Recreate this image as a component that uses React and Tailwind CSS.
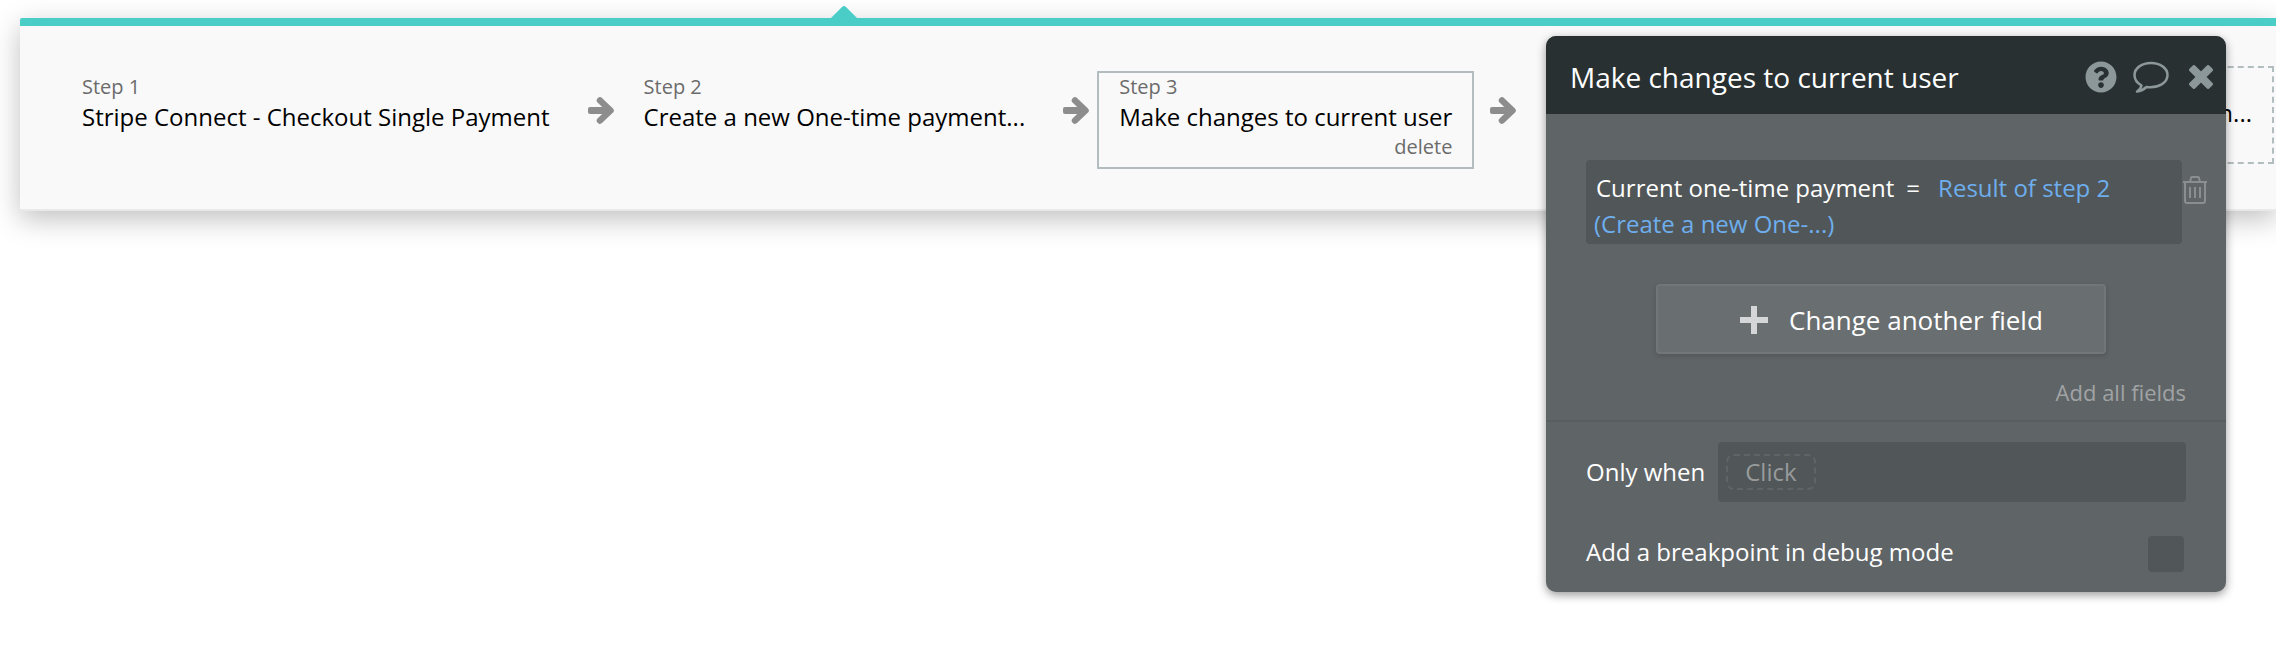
import { FaQuestionCircle } from 'react-icons/fa';

const steps = [
  { label: 'Step 1', title: 'Stripe Connect - Checkout Single Payment' },
  { label: 'Step 2', title: 'Create a new One-time payment...' },
  { label: 'Step 3', title: 'Make changes to current user', selected: true },
];

function ArrowIcon() {
  return (
    <svg className="mt-[31px] mr-2 ml-4 h-7 w-[26px] shrink-0" viewBox="0 0 26 28" fill="none" aria-hidden="true">
      <rect x="0" y="10" width="20" height="7" rx="2" fill="#8d8d8d" />
      <path d="M12 3.500L22.500 13.500L12 23.500" stroke="#8d8d8d" strokeWidth="6.500" strokeLinecap="round" strokeLinejoin="round" />
    </svg>
  );
}

function Step({ label, title, selected }) {
  return (
    <div
      className={`mt-[5px] flex shrink-0 flex-col border-2 px-5 pb-2 ${
        selected ? 'border-[#b3bdbf]' : 'border-transparent'
      }`}
    >
      <span className="text-[20px] leading-7 text-[#6b6b6b]">{label}</span>
      <span className="text-[24px] leading-8 text-black">{title}</span>
      {selected && (
        <button type="button" className="mt-0.5 self-end text-[20px] leading-6 text-[#6b6b6b]">
          delete
        </button>
      )}
    </div>
  );
}

function Workflow() {
  return (
    <section className="relative mt-[18px] ml-5 flex min-h-[193px] items-start rounded-l-xs border-t-8 border-b-2 border-t-[#4bcdc7] border-b-[#e9e9e9] bg-[#f9f9f9] pt-10 pr-0.5 pl-10 shadow-[0_8px_28px_rgba(0,0,0,0.25)]">
      <svg className="absolute -top-5 left-[811px] h-3 w-[26px]" viewBox="0 0 26 12" aria-hidden="true">
        <path d="M0 12L11 1Q13 -1 15 1L26 12Z" fill="#4bcdc7" />
      </svg>
      {steps.map((step) => (
        <div key={step.label} className="flex shrink-0 items-start">
          <Step {...step} />
          <ArrowIcon />
        </div>
      ))}
      <button
        type="button"
        className="ml-auto h-[98px] shrink-0 border-2 border-dashed border-[#b3bdbf] px-5 pb-1 text-[24px] leading-8 text-black"
      >
        Click here to add an action...
      </button>
    </section>
  );
}

function PropertyEditor() {
  return (
    <section className="absolute top-9 right-[50px] w-[680px] rounded-[10px] bg-[#5f6467] text-[24px] text-white shadow-[0_3px_10px_rgba(0,0,0,0.4)]">
      <header className="flex h-[78px] items-center rounded-t-[10px] bg-[#293032] pt-1 pr-[13px] pl-6">
        <h2 className="grow text-[28px] leading-9">Make changes to current user</h2>
        <button type="button" aria-label="Help" className="mr-4 text-[#8c9799]">
          <FaQuestionCircle className="size-8" />
        </button>
        <button type="button" aria-label="Comments" className="mr-5">
          <svg className="h-8 w-9" viewBox="0 0 36 32" fill="none" aria-hidden="true">
            <path
              d="M18 2C9 2 1.500 7 1.500 14C1.500 18.500 4 22 8.500 24.500C8 27 6.500 29 4 30.500C8 30 11 28.500 13.500 26C26 27.500 34.500 21.500 34.500 14C34.500 7 27 2 18 2Z"
              stroke="#8c9799"
              strokeWidth="2.500"
              strokeLinejoin="round"
            />
          </svg>
        </button>
        <button type="button" aria-label="Close">
          <svg className="size-6" viewBox="0 0 24 24" fill="#8c9799" aria-hidden="true">
            <rect x="-2" y="8" width="28" height="8" rx="2" transform="rotate(45 12 12)" />
            <rect x="-2" y="8" width="28" height="8" rx="2" transform="rotate(-45 12 12)" />
          </svg>
        </button>
      </header>

      <div className="flex pt-[46px] pl-10">
        <div className="w-[596px] rounded-sm bg-[#515658] px-2 pt-[10px] pb-0.5 leading-9">
          <span className="ml-0.5">Current one-time payment</span>
          <span className="mx-3">=</span>
          <a href="#step-2" className="ml-1.5 text-[#6eaeed]">
            Result of step 2 (Create a new One-...)
          </a>
        </div>
        <button type="button" aria-label="Delete field" className="mt-4 self-start">
          <svg className="h-7 w-[26px]" viewBox="0 0 26 28" fill="none" stroke="#8a8e90" strokeWidth="2" aria-hidden="true">
            <path d="M1 6H25M8 6L9 2Q9 1 10 1H16Q17 1 17 2L18 6M3 6V25Q3 27 5 27H21Q23 27 23 25V6M8 11V22M13 11V22M18 11V22" />
          </svg>
        </button>
      </div>

      <div className="mt-10 flex justify-center pr-2.5">
        <button
          type="button"
          className="flex h-[70px] w-[450px] items-center rounded border-2 border-[#717678] bg-[#696e70] pt-0.5 pl-[82px] text-[26px] shadow-[0_2px_5px_rgba(0,0,0,0.15)]"
        >
          <svg className="mr-[21px] size-7" viewBox="0 0 28 28" aria-hidden="true">
            <path d="M0 14H28M14 0V28" stroke="#d5d6d7" strokeWidth="6" />
          </svg>
          Change another field
        </button>
      </div>

      <div className="flex justify-end border-b-2 border-[#585d60] pt-[22px] pr-10 pb-3 leading-8">
        <button type="button" className="text-[22px] text-[#a0a3a4]">
          Add all fields
        </button>
      </div>

      <div className="flex items-center pt-5 pr-10 pl-10">
        <span className="mr-[13px] leading-8">Only when</span>
        <div className="flex h-[60px] grow items-center rounded-sm bg-[#515658] px-2">
          <button
            type="button"
            className="h-9 rounded-lg border-2 border-dashed border-[#5f6467] px-[17px] leading-8 text-[#989b9c]"
          >
            Click
          </button>
        </div>
      </div>

      <div className="flex items-center justify-between pt-[34px] pr-[42px] pb-5 pl-10">
        <label htmlFor="breakpoint" className="pb-1 leading-8">
          Add a breakpoint in debug mode
        </label>
        <input id="breakpoint" type="checkbox" className="size-9 appearance-none rounded-sm bg-[#515658]" />
      </div>
    </section>
  );
}

export default function App() {
  return (
    <main className="relative flow-root min-h-screen overflow-hidden bg-white font-['Open_Sans',sans-serif]">
      <Workflow />
      <PropertyEditor />
    </main>
  );
}
